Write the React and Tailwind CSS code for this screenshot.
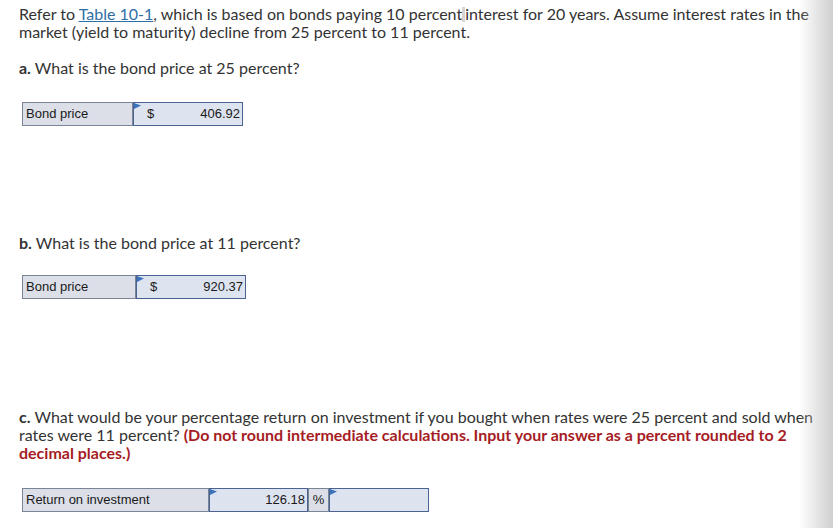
import React from "react";

const Flag = () => (
  <svg
    className="absolute left-0 top-0"
    width="7"
    height="7"
    viewBox="0 0 7 7"
  >
    <polygon points="0,0 7,2.5 0,6" fill="#3a72bd" />
  </svg>
);

function PriceTable({ labelW, inputW, value }) {
  return (
    <div className="flex h-[24px] font-['Liberation_Sans',Arial,sans-serif] text-[13px] text-[#1a1a1a]">
      <div
        className="flex items-center border border-[#7a8497] bg-[#dcdfe8] px-[3px]"
        style={{ width: labelW }}
      >
        Bond price
      </div>
      <div
        className="relative flex items-center justify-between border border-[#4a6390] bg-[#dde3ef] pl-[13px] pr-[2px]"
        style={{ width: inputW }}
      >
        <Flag />
        <span>$</span>
        <span>{value}</span>
      </div>
    </div>
  );
}

export default function App() {
  return (
    <div className="relative h-[528px] w-[833px] overflow-hidden bg-white font-['Lato','Open_Sans',sans-serif] text-[16px] leading-[18px] text-[#333]">
      {/* Right edge shadow of the page */}
      <div className="pointer-events-none absolute right-0 top-0 h-full w-[34px] bg-gradient-to-r from-white/0 to-[#cfcfcf]" />

      <div className="w-[822px] pl-[19px] pt-[5px]">
        <p>
          Refer to{" "}
          <span className="text-[#2e6ea6] underline decoration-[#2e6ea6]">
            Table 10-1
          </span>
          , which is based on bonds paying 10 percent
          <span className="inline-block h-[15px] w-[3px] align-[-2px] bg-[#d5d5d5]" />
          interest for 20 years. Assume interest rates in the market (yield to
          maturity) decline from 25 percent to 11 percent.
        </p>

        <p className="mt-[18px]">
          <b className="font-bold">a.</b> What is the bond price at 25 percent?
        </p>
        <div className="mt-[25px] ml-[3px]">
          <PriceTable labelW={111} inputW={110} value="406.92" />
        </div>

        <p className="mt-[108px]">
          <b className="font-bold">b.</b> What is the bond price at 11 percent?
        </p>
        <div className="mt-[23px] ml-[3px]">
          <PriceTable labelW={114} inputW={110} value="920.37" />
        </div>

        <p className="mt-[109px]">
          <b className="font-bold">c.</b> What would be your percentage return on
          investment if you bought when rates were 25 percent and sold when
          rates were 11 percent?{" "}
          <b className="font-bold text-[#a61c24]">
            (Do not round intermediate calculations. Input your answer as a
            percent rounded to 2<br />
            decimal places.)
          </b>
        </p>

        <div className="mt-[26px] ml-[3px] flex h-[24px] font-['Liberation_Sans',Arial,sans-serif] text-[13px] text-[#1a1a1a]">
          <div className="flex w-[187px] items-center border border-[#7a8497] bg-[#dcdfe8] px-[3px]">
            Return on investment
          </div>
          <div className="relative flex w-[99px] items-center justify-end border border-[#4a6390] bg-[#dde3ef] pr-[2px]">
            <Flag />
            126.18
          </div>
          <div className="flex w-[21px] items-center justify-center border border-[#7a8497] bg-[#dcdfe8]">
            %
          </div>
          <div className="relative w-[100px] border border-[#4a6390] bg-[#dde3ef]">
            <Flag />
          </div>
        </div>
      </div>
    </div>
  );
}
